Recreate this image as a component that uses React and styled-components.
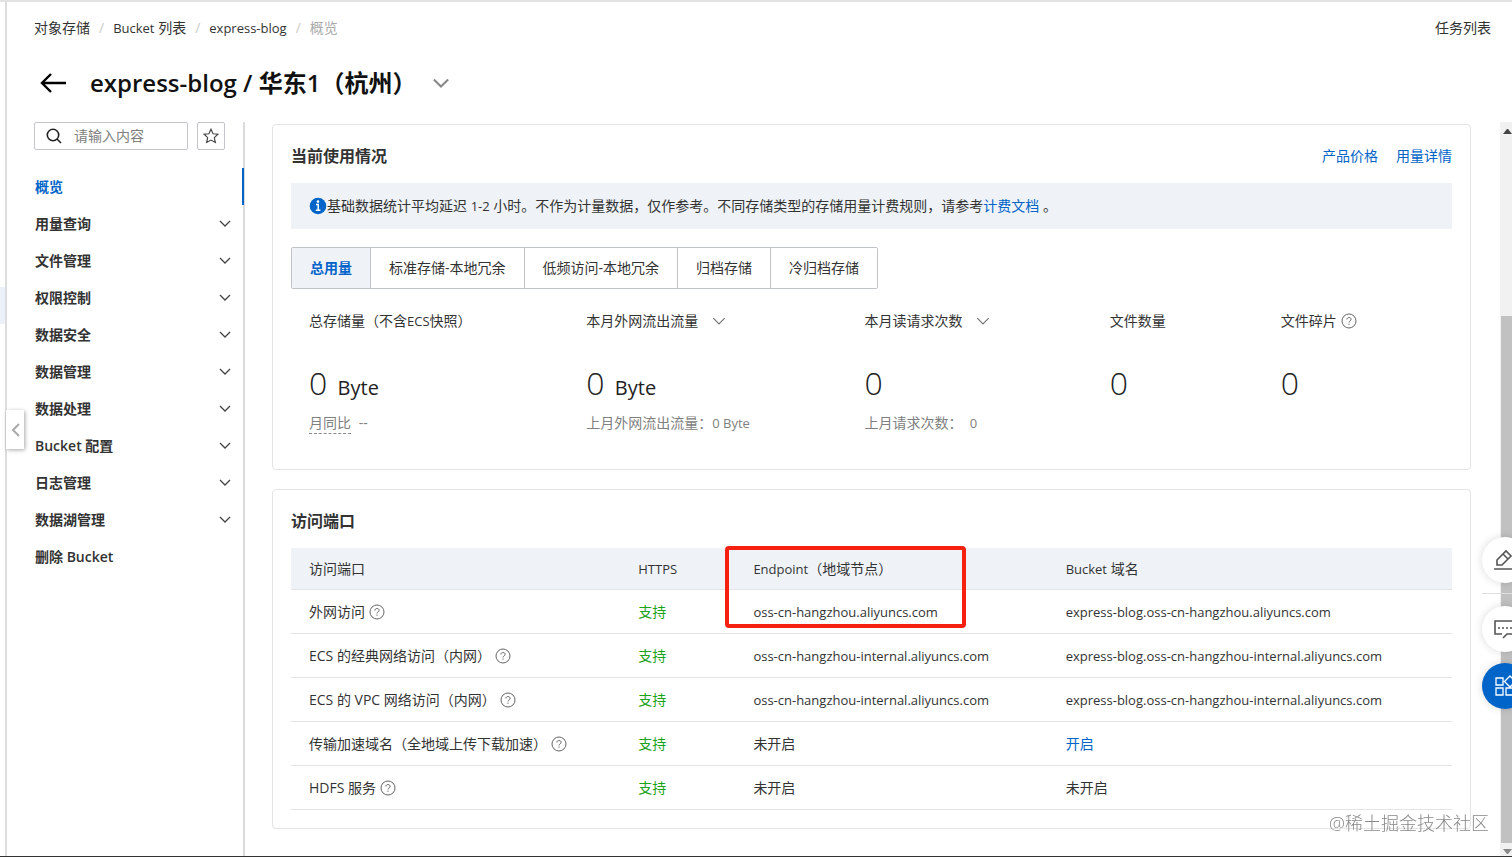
import React from 'react'
import styled, { createGlobalStyle, css } from 'styled-components'

const color = {
  primary: '#0064c8',
  text: '#333',
  muted: '#808080',
  line: '#e3e4e6',
  panel: '#eff3f8',
  success: '#1aa31a',
  mark: '#f5200f',
}

const menu = [
  { label: '概览', active: true },
  { label: '用量查询', more: true },
  { label: '文件管理', more: true },
  { label: '权限控制', more: true },
  { label: '数据安全', more: true },
  { label: '数据管理', more: true },
  { label: '数据处理', more: true },
  { label: 'Bucket 配置', more: true },
  { label: '日志管理', more: true },
  { label: '数据湖管理', more: true },
  { label: '删除 Bucket' },
]

const tabs = ['总用量', '标准存储-本地冗余', '低频访问-本地冗余', '归档存储', '冷归档存储']

const endpoints = [
  {
    name: '外网访问',
    endpoint: 'oss-cn-hangzhou.aliyuncs.com',
    domain: 'express-blog.oss-cn-hangzhou.aliyuncs.com',
  },
  {
    name: 'ECS 的经典网络访问（内网）',
    endpoint: 'oss-cn-hangzhou-internal.aliyuncs.com',
    domain: 'express-blog.oss-cn-hangzhou-internal.aliyuncs.com',
  },
  {
    name: 'ECS 的 VPC 网络访问（内网）',
    endpoint: 'oss-cn-hangzhou-internal.aliyuncs.com',
    domain: 'express-blog.oss-cn-hangzhou-internal.aliyuncs.com',
  },
  { name: '传输加速域名（全地域上传下载加速）', action: '开启' },
  { name: 'HDFS 服务' },
]

const Chevron = ({ width = 12, stroke = '#444' }) => (
  <svg width={width} height={width / 2 + 1} viewBox="0 0 12 7" fill="none" stroke={stroke} aria-hidden="true">
    <path d="M1 1l5 5 5-5" vectorEffect="non-scaling-stroke" strokeWidth={width > 16 ? 2 : 1.3} />
  </svg>
)

const Help = () => (
  <HelpIcon viewBox="0 0 16 16" fill="none" stroke="#666" aria-hidden="true">
    <circle cx="8" cy="8" r="7" />
    <path d="M5.9 6.5c0-1.3.9-2 2.1-2s2.1.7 2.1 1.9c0 1.5-2.1 1.5-2.1 3.1" />
    <path d="M8 10.6v1.2" />
  </HelpIcon>
)

const App = () => (
  <Shell>
    <GlobalStyle />
    <Rail>
      <RailMark />
      <Collapse type="button" aria-label="收起">
        <svg width="9" height="14" viewBox="0 0 9 14" fill="none" stroke="#aaa" strokeWidth="2">
          <path d="M8 1L2 7l6 6" />
        </svg>
      </Collapse>
    </Rail>
    <Console>
      <TopBar>
        <Breadcrumb>
          <a href="#oss">对象存储</a>
          <a href="#buckets"><Latin>Bucket</Latin> 列表</a>
          <a href="#bucket"><Latin>express-blog</Latin></a>
          <span>概览</span>
        </Breadcrumb>
        <a href="#tasks">任务列表</a>
      </TopBar>
      <TitleBar>
        <IconButton type="button" aria-label="返回">
          <svg width="26" height="20" viewBox="0 0 26 20" fill="none" stroke="#000" strokeWidth="2.4">
            <path d="M26 10H2M11 1L2 10l9 9" />
          </svg>
        </IconButton>
        <h1>express-blog / 华东1（杭州）</h1>
        <IconButton type="button" aria-label="切换 Bucket">
          <Chevron width={18} stroke="#888" />
        </IconButton>
      </TitleBar>
      <Body>
        <SideNav>
          <SearchRow>
            <SearchBox>
              <svg width="16" height="16" viewBox="0 0 16 16" fill="none" stroke="#222" strokeWidth="1.6">
                <circle cx="7" cy="7" r="5.7" />
                <path d="M11 11l4 4" />
              </svg>
              <input type="text" placeholder="请输入内容" aria-label="搜索" />
            </SearchBox>
            <StarButton type="button" aria-label="收藏">
              <svg width="16" height="16" viewBox="0 0 14 14" fill="none" stroke="#444">
                <path d="M7 1l1.8 4 4.2.5-3.1 2.9.9 4.3L7 10.6l-3.8 2.1.9-4.3L1 5.5 5.2 5z" />
              </svg>
            </StarButton>
          </SearchRow>
          <Menu>
            {menu.map(({ label, active, more }) => (
              <MenuItem key={label} $active={active}>
                <a href={`#${label}`}>
                  {label}
                  {more && <Chevron width={12} />}
                </a>
              </MenuItem>
            ))}
          </Menu>
        </SideNav>
        <Main>
          <Card>
            <CardHead>
              <h2>当前使用情况</h2>
              <div>
                <Link href="#price">产品价格</Link>
                <Link href="#usage">用量详情</Link>
              </div>
            </CardHead>
            <Notice>
              <svg width="18" height="18" viewBox="0 0 18 18" aria-hidden="true">
                <circle cx="9" cy="9" r="8.3" fill={color.primary} />
                <circle cx="9" cy="4.6" r="1.3" fill="#fff" />
                <path d="M7 7.4h2.2v5.6M6.8 13.3h4.6" fill="none" stroke="#fff" strokeWidth="1.5" />
              </svg>
              <p>
                基础数据统计平均延迟 <Latin>1-2</Latin> 小时。不作为计量数据，仅作参考。不同存储类型的存储用量计费规则，请参考
                <Link href="#billing">计费文档</Link> 。
              </p>
            </Notice>
            <Tabs role="tablist">
              {tabs.map((tab, i) => (
                <Tab key={tab} type="button" role="tab" aria-selected={i === 0} $active={i === 0}>
                  {tab}
                </Tab>
              ))}
            </Tabs>
            <Stats>
              <Stat>
                <StatName>总存储量（不含<Latin>ECS</Latin>快照）</StatName>
                <StatValue>0 <small>Byte</small></StatValue>
                <StatNote><abbr>月同比</abbr> --</StatNote>
              </Stat>
              <Stat>
                <StatName>
                  本月外网流出流量
                  <IconButton type="button" aria-label="切换流量"><Chevron width={14} stroke="#777" /></IconButton>
                </StatName>
                <StatValue>0 <small>Byte</small></StatValue>
                <StatNote>上月外网流出流量：<Latin>0 Byte</Latin></StatNote>
              </Stat>
              <Stat>
                <StatName>
                  本月读请求次数
                  <IconButton type="button" aria-label="切换请求"><Chevron width={14} stroke="#777" /></IconButton>
                </StatName>
                <StatValue>0</StatValue>
                <StatNote>上月请求次数：&nbsp; <Latin>0</Latin></StatNote>
              </Stat>
              <Stat>
                <StatName>文件数量</StatName>
                <StatValue>0</StatValue>
              </Stat>
              <Stat>
                <StatName>文件碎片<Help /></StatName>
                <StatValue>0</StatValue>
              </Stat>
            </Stats>
          </Card>
          <Card>
            <CardHead>
              <h2>访问端口</h2>
            </CardHead>
            <Table>
              <colgroup>
                <Col $width={329} />
                <Col $width={115} />
                <Col $width={312} />
                <Col $width={404} />
              </colgroup>
              <thead>
                <tr>
                  <th>访问端口</th>
                  <th><Latin>HTTPS</Latin></th>
                  <th>
                    <Latin>Endpoint</Latin>（地域节点）
                    <Highlight />
                  </th>
                  <th><Latin>Bucket</Latin> 域名</th>
                </tr>
              </thead>
              <tbody>
                {endpoints.map(({ name, endpoint, domain, action }) => (
                  <tr key={name}>
                    <td><NameCell>{name}<Help /></NameCell></td>
                    <td><Supported>支持</Supported></td>
                    <td>{endpoint ? <Latin>{endpoint}</Latin> : '未开启'}</td>
                    <td>
                      {domain && <Latin>{domain}</Latin>}
                      {action && <Link href="#enable">{action}</Link>}
                      {!domain && !action && '未开启'}
                    </td>
                  </tr>
                ))}
              </tbody>
            </Table>
          </Card>
        </Main>
        <ScrollTrack aria-hidden="true">
          <ScrollArrow />
          <ScrollThumb />
          <ScrollArrow $down />
        </ScrollTrack>
      </Body>
    </Console>
    <Dock>
      <DockButton type="button" aria-label="调研">
        <svg width="22" height="22" viewBox="0 0 22 22" fill="none" stroke="#555" strokeWidth="1.6">
          <path d="M3 16v-5l9-9 5 5-9 9zM9 5l5 5M0 20h22" />
        </svg>
      </DockButton>
      <hr />
      <DockButton type="button" aria-label="咨询">
        <svg width="22" height="22" viewBox="0 0 22 22" fill="none" stroke="#555" strokeWidth="1.6">
          <path d="M8 16H1V3h20v13h-8l-4 4" />
          <path d="M4 10h2M8 10h2M12 10h2M16 10h2" />
        </svg>
      </DockButton>
      <DockButton type="button" aria-label="应用" $primary>
        <svg width="22" height="22" viewBox="0 0 22 22" fill="none" stroke="#fff" strokeWidth="1.3">
          <path d="M2 3h7v7H2zM2 13h7v7H2zM12 13h7v7h-7zM16 1l5.5 5.5L16 12l-5.5-5.5z" />
        </svg>
      </DockButton>
    </Dock>
    <Watermark>@稀土掘金技术社区</Watermark>
  </Shell>
)

export default App

const GlobalStyle = createGlobalStyle`
  * {
    box-sizing: border-box;
  }

  body {
    margin: 0;
    background: #fff;
    color: ${color.text};
    font-family: 'Open Sans', 'Noto Sans CJK SC', sans-serif;
    font-size: 14px;
    line-height: 22px;
  }

  h1, h2, p {
    margin: 0;
  }

  a {
    color: inherit;
    text-decoration: none;
  }

  button, input {
    font: inherit;
    color: inherit;
  }

  svg {
    flex: none;
  }
`

const Shell = styled.div`
  display: flex;
  min-height: 100vh;
  border-top: 2px solid #e2e2e2;
  border-bottom: 1px solid #333;
  overflow: hidden;
`

const Rail = styled.aside`
  position: relative;
  flex: none;
  width: 7px;
  border-right: 2px solid #dcdddf;
`

const RailMark = styled.div`
  height: 37px;
  margin-top: 285px;
  background: #ecf0f9;
`

const Collapse = styled.button`
  position: absolute;
  top: 408px;
  left: 6px;
  display: flex;
  align-items: center;
  justify-content: center;
  width: 18px;
  height: 39px;
  padding: 0;
  border: 0;
  background: #fff;
  box-shadow: 1px 1px 4px rgba(0, 0, 0, 0.35);
`

const Console = styled.div`
  display: flex;
  flex: 1;
  flex-direction: column;
  min-width: 0;
`

const TopBar = styled.header`
  display: flex;
  justify-content: space-between;
  padding: 15px 21px 0 27px;
`

// latin runs sit one step below the Chinese text
const Latin = styled.span`
  font-size: 13px;
`

const Breadcrumb = styled.nav`
  display: flex;

  > * + *::before {
    content: '/';
    margin: 0 9px;
    color: #ccc;
  }

  > span {
    color: #aaa;
  }
`

const TitleBar = styled.div`
  display: flex;
  align-items: center;
  height: 83px;
  padding: 4px 0 0 33px;

  h1 {
    margin: 0 16px 0 24px;
    color: #111;
    font-size: 24px;
    font-weight: 600;
    line-height: 36px;
  }
`

const IconButton = styled.button`
  display: inline-flex;
  align-items: center;
  padding: 0;
  border: 0;
  background: none;
`

const Body = styled.div`
  display: flex;
  flex: 1;
`

const SideNav = styled.aside`
  flex: none;
  width: 238px;
  padding-left: 27px;
  border-right: 2px solid #d9dbdd;
`

const SearchRow = styled.div`
  display: flex;
  gap: 9px;
  padding-right: 18px;
`

const SearchBox = styled.label`
  display: flex;
  flex: 1;
  align-items: center;
  gap: 12px;
  height: 28px;
  padding-left: 11px;
  border: 1px solid #c4c6cb;
  border-radius: 2px;

  input {
    width: 100%;
    min-width: 0;
    padding: 0;
    border: 0;
    outline: 0;
    background: none;
  }

  input::placeholder {
    color: #808080;
  }
`

const StarButton = styled.button`
  display: flex;
  align-items: center;
  justify-content: center;
  width: 28px;
  height: 28px;
  padding: 0;
  border: 1px solid #c4c6cb;
  border-radius: 2px;
  background: #fff;
`

const Menu = styled.ul`
  margin: 18px 0 0;
  padding: 0;
  list-style: none;
`

const MenuItem = styled.li`
  font-weight: 600;

  a {
    display: flex;
    align-items: center;
    justify-content: space-between;
    height: 37px;
    padding: 0 12px 0 1px;
  }

  ${({ $active }) => $active && css`
    margin-right: -1px;
    color: ${color.primary};
    border-right: 2px solid ${color.primary};
  `}
`

const Main = styled.main`
  display: flex;
  flex: 1;
  flex-direction: column;
  gap: 19px;
  min-width: 0;
  padding: 2px 29px 24px 27px;
`

const Card = styled.section`
  padding: 0 18px 18px;
  border: 1px solid ${color.line};
  border-radius: 4px;

  &:first-child {
    padding-bottom: 35px;
  }
`

const CardHead = styled.div`
  display: flex;
  align-items: center;
  justify-content: space-between;
  height: 58px;
  padding-top: 4px;

  h2 {
    font-size: 16px;
    font-weight: 700;
  }

  div {
    display: flex;
    gap: 18px;
  }
`

const Link = styled.a`
  color: ${color.primary};
`

const Notice = styled.div`
  display: flex;
  align-items: center;
  height: 46px;
  padding: 0 18px;
  background: ${color.panel};
`

const Tabs = styled.div`
  display: inline-flex;
  margin-top: 18px;
  border: 1px solid #c0c3c8;
  border-radius: 2px;
`

const Tab = styled.button`
  height: 40px;
  padding: 0 18px;
  border: 0;
  background: ${({ $active }) => ($active ? color.panel : '#fff')};
  color: ${({ $active }) => ($active ? color.primary : color.text)};
  font-weight: ${({ $active }) => ($active ? 700 : 400)};

  & + & {
    border-left: 1px solid #c0c3c8;
  }
`

const Stats = styled.div`
  display: grid;
  grid-template-columns: 277fr 278fr 245fr 171fr 189fr;
  margin-top: 21px;
`

const Stat = styled.div`
  padding-left: 18px;
`

const StatName = styled.div`
  display: flex;
  align-items: center;
  height: 22px;

  button {
    margin-left: 14px;
  }
`

const StatValue = styled.div`
  margin-top: 29px;
  color: #222;
  font-size: 32px;
  font-weight: 300;
  line-height: 44px;

  small {
    margin-left: 2px;
    font-size: 20px;
    font-weight: 400;
    line-height: 20px;
  }
`

const StatNote = styled.div`
  height: 22px;
  margin-top: 7px;
  color: ${color.muted};

  abbr {
    display: inline-block;
    margin-right: 4px;
    border-bottom: 1px dashed #888;
    line-height: 20px;
  }
`

const HelpIcon = styled.svg`
  width: 16px;
  height: 16px;
  margin-left: 4px;
`

const Table = styled.table`
  width: 100%;
  border-collapse: separate;
  border-spacing: 0;
  table-layout: fixed;

  th, td {
    position: relative;
    height: 44px;
    padding: 0 0 0 18px;
    border-bottom: 1px solid ${color.line};
    font-weight: 400;
    text-align: left;
    white-space: nowrap;
  }

  th {
    height: 42px;
    background: ${color.panel};
  }
`

const Col = styled.col`
  width: ${({ $width }) => ($width / 1160) * 100}%;
`

const Highlight = styled.div`
  position: absolute;
  z-index: 1;
  top: -2px;
  left: -10px;
  width: 241px;
  height: 82px;
  border: 4px solid ${color.mark};
  border-radius: 4px;
  pointer-events: none;
`

const NameCell = styled.div`
  display: flex;
  align-items: center;
`

const Supported = styled.span`
  color: ${color.success};
`

const ScrollTrack = styled.div`
  display: flex;
  flex: none;
  flex-direction: column;
  align-items: center;
  width: 12px;
  padding: 7px 0 2px;
  background: #f1f1f1;
`

const ScrollArrow = styled.div`
  align-self: flex-end;
  width: 9px;
  border: 4px solid transparent;
  border-top: ${({ $down }) => ($down ? '5px solid #888' : '0')};
  border-bottom: ${({ $down }) => ($down ? '0' : '5px solid #444')};
`

const ScrollThumb = styled.div`
  flex: 1;
  align-self: flex-end;
  width: 11px;
  margin: 182px 0 6px;
  background: #c1c1c1;
`

const Dock = styled.div`
  position: fixed;
  z-index: 2;
  top: 537px;
  right: -16px;
  display: flex;
  flex-direction: column;

  hr {
    width: 44px;
    margin: 10px 0 12px;
    border: 0;
    border-top: 1px solid #ddd;
  }
`

const DockButton = styled.button`
  display: flex;
  align-items: center;
  justify-content: center;
  width: 46px;
  height: 46px;
  padding: 0;
  border: 0;
  border-radius: 50%;
  background: ${({ $primary }) => ($primary ? color.primary : '#fff')};
  box-shadow: 0 0 8px rgba(0, 0, 0, 0.15);

  & + & {
    margin-top: 11px;
  }
`

const Watermark = styled.div`
  position: fixed;
  right: 23px;
  bottom: 23px;
  color: #888;
  font-size: 18px;
  font-weight: 300;
`
